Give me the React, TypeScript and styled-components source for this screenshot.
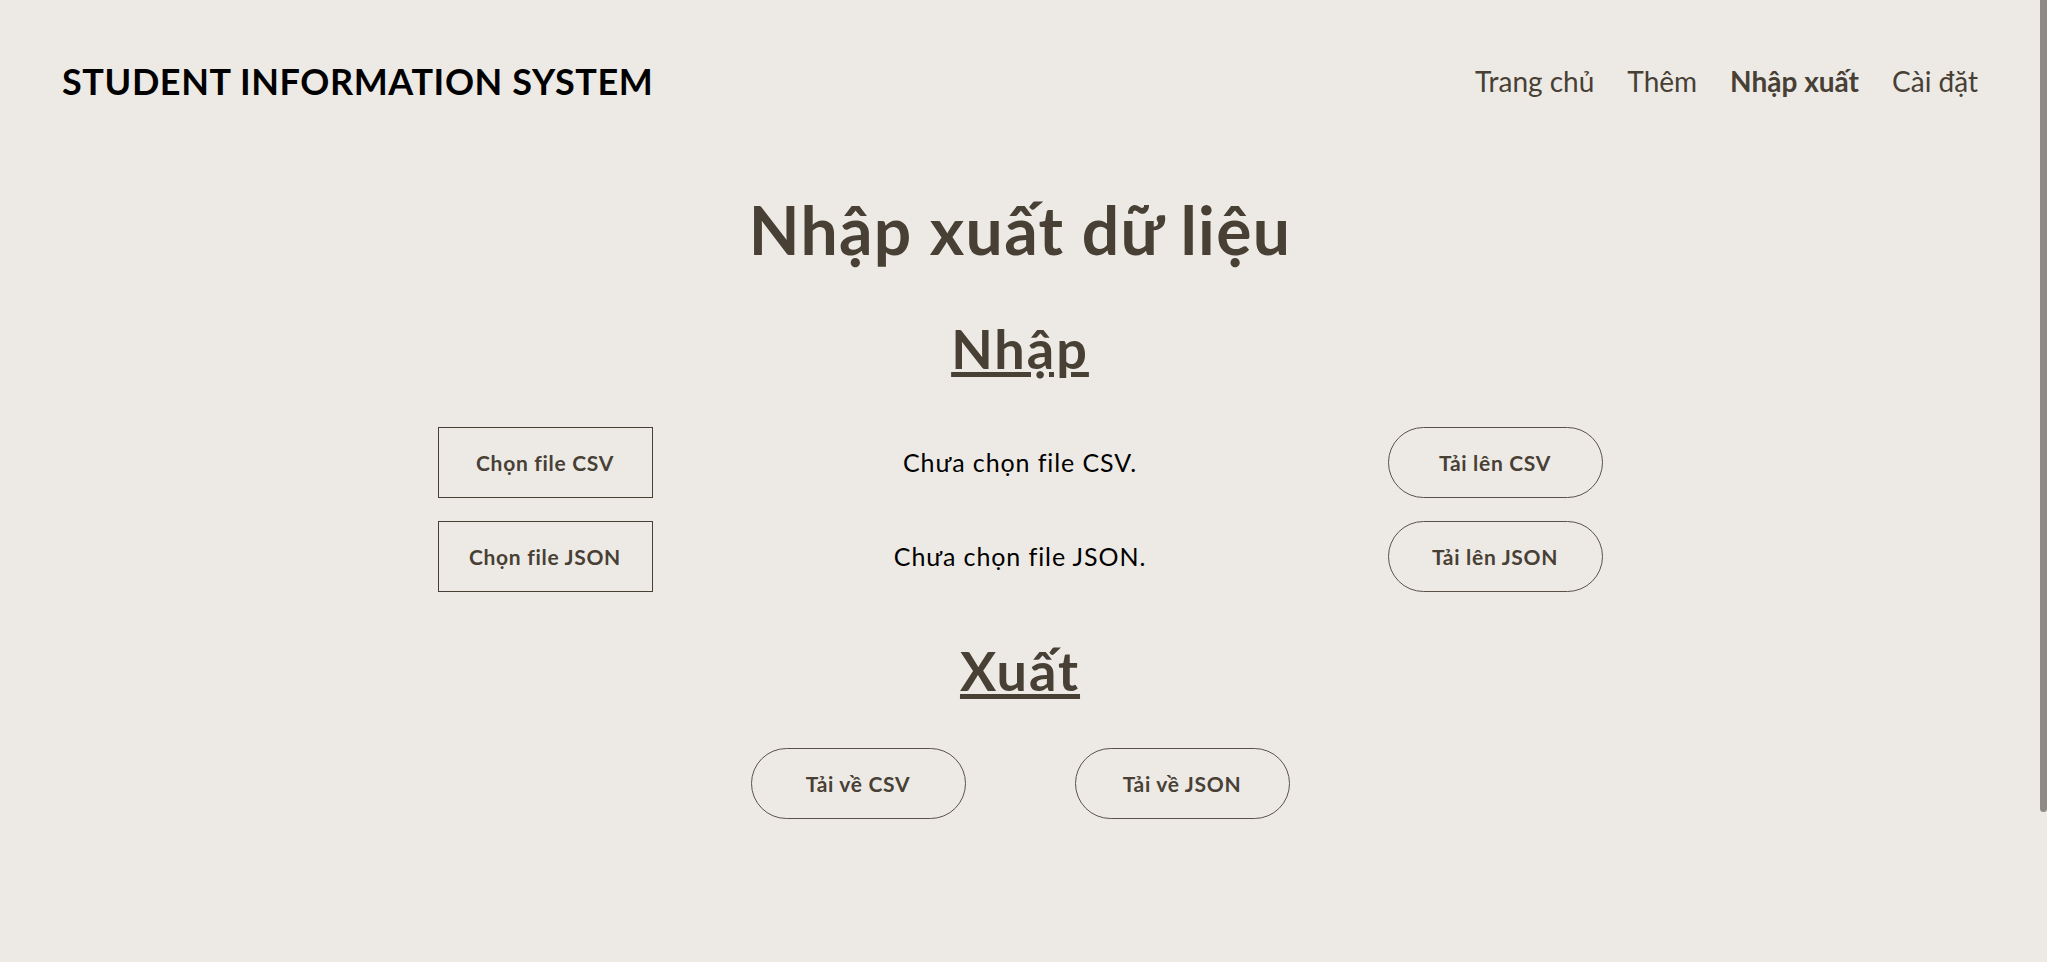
import styled, { createGlobalStyle } from 'styled-components'

const GlobalStyle = createGlobalStyle`
  html, body {
    margin: 0;
    padding: 0;
    background: #edeae5;
    font-family: 'Lato', 'Noto Sans', sans-serif;
  }
`

// the page scrolls a little; headless hides the real bar, so draw its thumb
const ScrollThumb = styled.div`
  position: fixed;
  top: 0;
  right: 0;

  width: 7px;
  height: 812px;

  border-radius: 0 0 4px 4px;

  background: #8f8a83;
`

const Page = styled.div`
  display: flex;
  flex-direction: column;

  padding: 0 7px 321px 0;
`

const Header = styled.header`
  display: flex;
  justify-content: space-between;
  align-items: center;

  box-sizing: border-box;
  padding: 0 62px;

  height: 163px;
`

const Logo = styled.h1`
  margin: 0;

  font: 700 36px/1.2 'Lato', sans-serif;
  letter-spacing: 0.6px;
  color: #000;
`

const Nav = styled.nav`
  display: flex;
  gap: 33px;
`

const NavLink = styled.a<{ active?: boolean }>`
  font: ${(props) => (props.active ? 700 : 400)} 28px/1.2 'Lato', sans-serif;
  color: #483f35;

  text-decoration: none;
  cursor: pointer;
`

const Main = styled.main`
  display: flex;
  flex-direction: column;
  align-items: center;
`

const Title = styled.h2`
  margin: 27px 0 0;

  font: 700 66px/1.2 'Lato', sans-serif;
  letter-spacing: 1.3px;
  color: #483f35;
`

const Section = styled.h3<{ top: number }>`
  margin: ${(props) => props.top}px 0 0;

  font: 700 54px/1.2 'Lato', sans-serif;
  letter-spacing: 2px;
  color: #483f35;

  text-decoration: underline;
  text-decoration-thickness: 5px;
  text-underline-offset: 3px;
`

const ImportGrid = styled.div`
  display: grid;
  grid-template-columns: 215px 1fr 215px;
  grid-auto-rows: 71px;
  row-gap: 23px;
  align-items: center;

  margin-top: 45px;

  width: 1165px;
`

const PickButton = styled.button`
  box-sizing: border-box;
  height: 71px;
  width: 215px;

  border: 1px solid #483f35;
  border-radius: 0;

  font: 700 21px 'Lato', sans-serif;
  letter-spacing: 0.7px;
  color: #483f35;

  background: transparent;
  cursor: pointer;
`

const PillButton = styled(PickButton)`
  border-color: #5a5248;
  border-radius: 36px;
`

const Status = styled.p`
  margin: 0;

  text-align: center;

  font: 400 25px 'Lato', sans-serif;
  letter-spacing: 0.9px;
  color: #000;
`

const ExportRow = styled.div`
  display: flex;
  gap: 109px;

  margin-top: 44px;
`

const App = () => {
  return (
    <>
      <GlobalStyle />
      <Page>
        <Header>
          <Logo>STUDENT INFORMATION SYSTEM</Logo>
          <Nav>
            <NavLink>Trang chủ</NavLink>
            <NavLink>Thêm</NavLink>
            <NavLink active>Nhập xuất</NavLink>
            <NavLink>Cài đặt</NavLink>
          </Nav>
        </Header>
        <Main>
          <Title>Nhập xuất dữ liệu</Title>
          <Section top={48}>Nhập</Section>
          <ImportGrid>
            <PickButton>Chọn file CSV</PickButton>
            <Status>Chưa chọn file CSV.</Status>
            <PillButton>Tải lên CSV</PillButton>
            <PickButton>Chọn file JSON</PickButton>
            <Status>Chưa chọn file JSON.</Status>
            <PillButton>Tải lên JSON</PillButton>
          </ImportGrid>
          <Section top={47}>Xuất</Section>
          <ExportRow>
            <PillButton>Tải về CSV</PillButton>
            <PillButton>Tải về JSON</PillButton>
          </ExportRow>
        </Main>
      </Page>
      <ScrollThumb />
    </>
  )
}

export default App
